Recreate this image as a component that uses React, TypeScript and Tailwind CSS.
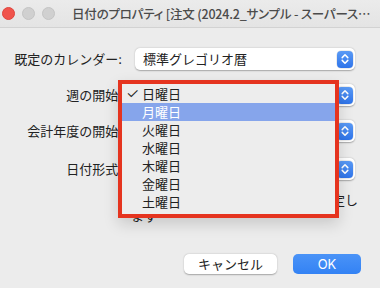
import React from "react";

const font = { fontFamily: '"Inter", "Noto Sans CJK JP", sans-serif' };
const titleFont = { fontFamily: '"Noto Sans CJK JP", sans-serif' };

function Stepper() {
  return (
    <div className="w-[16px] h-[17px] rounded-[4px] bg-gradient-to-b from-[#5a9af5] to-[#2f74ea] flex items-center justify-center shadow-[0_0_0_0.5px_rgba(0,0,0,0.15)]">
      <svg width="8" height="12" viewBox="0 0 8 12" fill="none">
        <path d="M1.2 4.6 L4 1.8 L6.8 4.6" stroke="white" strokeWidth="1.5" strokeLinecap="round" strokeLinejoin="round" />
        <path d="M1.2 7.4 L4 10.2 L6.8 7.4" stroke="white" strokeWidth="1.5" strokeLinecap="round" strokeLinejoin="round" />
      </svg>
    </div>
  );
}

function Popup({ text }: { text: string }) {
  return (
    <div className="w-[220px] h-[22px] rounded-[5px] bg-white shadow-[0_0.5px_1.5px_rgba(0,0,0,0.3)] flex items-center pl-[8px] pr-[2px]">
      <span className="flex-1 text-[13px] leading-[16px] text-[#222]">{text}</span>
      <Stepper />
    </div>
  );
}

function Row({ label, text, className }: { label: string; text: string; className?: string }) {
  return (
    <div className={"flex items-center " + (className ?? "")}>
      <div className="w-[122px] text-right text-[13px] leading-[16px] text-[#222] whitespace-nowrap">{label}</div>
      <div className="ml-[13px]">
        <Popup text={text} />
      </div>
    </div>
  );
}

const days = ["日曜日", "月曜日", "火曜日", "水曜日", "木曜日", "金曜日", "土曜日"];

export default function App() {
  return (
    <div className="relative w-[380px] h-[288px] bg-[#ececec] overflow-hidden" style={font}>
      {/* title bar */}
      <div className="h-[28px] bg-gradient-to-b from-[#ebebeb] to-[#e4e4e4] border-b border-[#d2d2d2] flex items-center">
        <div className="flex items-center gap-[7px] pl-[2px]">
          <div className="w-[13px] h-[13px] rounded-full bg-[#f0544c] border border-[#e0443c]" />
          <div className="w-[13px] h-[13px] rounded-full bg-[#d0d0d0] border border-[#c4c4c4]" />
          <div className="w-[13px] h-[13px] rounded-full bg-[#d0d0d0] border border-[#c4c4c4]" />
        </div>
        <div
          className="ml-[17px] text-[12.5px] leading-[16px] font-medium text-[#4b4b4b] whitespace-nowrap tracking-[-0.2px] [font-feature-settings:'palt']"
          style={titleFont}
        >
          日付のプロパティ{"\u00a0"}[注文 (2024.2_サンプル - スーパース…
        </div>
      </div>

      {/* body */}
      <div className="pt-[20px]">
        <Row label="既定のカレンダー:" text="標準グレゴリオ暦" />
        <Row label="週の開始:" text="" className="mt-[14px]" />
        <Row label="会計年度の開始:" text="" className="mt-[14px]" />
        <Row label="日付形式:" text="" className="mt-[16px]" />
        <div className="mt-[12px] text-[13px] leading-[16px] text-[#222]">
          <div className="w-[358px] text-right whitespace-nowrap">定し</div>
          <div className="pl-[131px] whitespace-nowrap">ます</div>
        </div>
      </div>

      {/* buttons */}
      <div className="absolute left-0 right-0 top-[254px] flex justify-end gap-[16px] pr-[19px]">
        <div className="w-[93px] h-[20px] rounded-[5px] bg-white shadow-[0_0.5px_1.5px_rgba(0,0,0,0.3)] flex items-center justify-center text-[13px] leading-[16px] text-[#222]">
          キャンセル
        </div>
        <div className="w-[68px] h-[20px] rounded-[5px] bg-gradient-to-b from-[#4a93f7] to-[#3382f4] flex items-center justify-center text-[13px] leading-[16px] text-white">
          OK
        </div>
      </div>

      {/* popup menu with red annotation */}
      <div className="absolute left-[118px] top-[80px] w-[221px] h-[138px] border-[4px] border-[#e5341f] bg-[#ededed] shadow-[0_6px_14px_rgba(0,0,0,0.15)]">
        <div className="pt-[1px]">
          {days.map((d, i) => (
            <div
              key={d}
              className={
                "h-[18px] flex items-center text-[13px] leading-[16px] " +
                (i === 1 ? "bg-[#86a5eb] text-white" : "text-[#222]")
              }
            >
              <span className="w-[20px] pl-[4px] text-[15px] leading-[16px] font-light">{i === 0 ? "✓" : ""}</span>
              <span>{d}</span>
            </div>
          ))}
        </div>
      </div>
    </div>
  );
}
